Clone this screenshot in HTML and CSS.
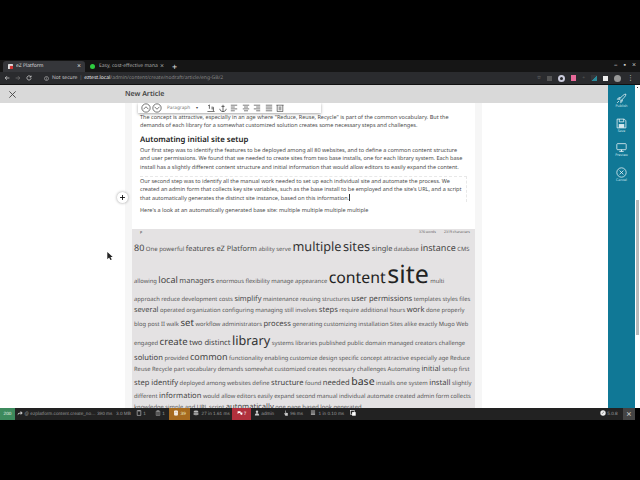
FILE: index.html
```html
<!DOCTYPE HTML>
<html>

<head>
	<meta charset="utf-8">
	<title>New Article</title>
	<link rel="stylesheet" href="styles.css">
</head>
<body>

<div class="letterbox"></div>

<div class="screen">

	<!-- browser -->
	<div class="tabs">
		<div class="tab active">
			<svg class="fav" viewBox="0 0 8 8"><rect width="8" height="8" rx="1" fill="#ddd"/><rect x="3" y="3" width="5" height="5" fill="#c33"/></svg>
			<span class="tab-name">eZ Platform</span><span class="tab-x">×</span>
		</div>
		<div class="tab">
			<span class="green-dot"></span>
			<span class="tab-name">Easy, cost-effective mana</span><span class="tab-x">×</span>
		</div>
		<span class="tab-new">+</span>
		<div class="win-btns"><span>–</span><span>▪</span><span>×</span></div>
	</div>

	<div class="urlbar">
		<svg class="nav" viewBox="0 0 10 10"><path d="M9 5H2M5 2L2 5l3 3" fill="none" stroke="#ddd" stroke-width="1.200"/></svg>
		<svg class="nav" viewBox="0 0 10 10"><path d="M1 5h7M5 2l3 3-3 3" fill="none" stroke="#777" stroke-width="1.200"/></svg>
		<svg class="nav" viewBox="0 0 10 10"><path d="M8 3a3.500 3.500 0 1 0 .5 2.500M8.500 1v2.500H6" fill="none" stroke="#ddd" stroke-width="1.200"/></svg>
		<svg class="url-info" viewBox="0 0 10 10"><circle cx="5" cy="5" r="4" fill="none" stroke="#ccc"/><path d="M5 4.500V7.500M5 2.500v1" stroke="#ccc"/></svg>
		<span class="url-secure">Not secure</span>
		<span class="url-sep">|</span>
		<span class="url-host">eztest.local</span><span class="url-path">/admin/content/create/nodraft/article/eng-GB/2</span>
		<div class="url-icons">
			<span class="ico-star">☆</span>
			<span class="ico-box"></span>
			<span class="ico-ring"></span>
			<span class="ico-pink"></span>
			<span class="ico-cross">+</span>
			<span class="ico-pen"></span>
			<span class="ico-puzzle"></span>
			<span class="ico-avatar"></span>
			<span class="ico-dots">⋮</span>
		</div>
	</div>

	<!-- app -->
	<div class="app">
		<div class="main">
			<div class="titlebar">
				<svg class="close" viewBox="0 0 10 10"><path d="M1.500 1.500l7 7M8.500 1.500l-7 7" stroke="#444" stroke-width="1"/></svg>
				<span class="title">New Article</span>
			</div>
			<div class="workspace">
				<div class="column">
					<div class="sheet">
						<div class="toolbar">
							<svg class="tb-round" viewBox="0 0 12 12"><circle cx="6" cy="6" r="5" fill="none" stroke="#333" stroke-width=".8"/><path d="M3 7.500l3-3 3 3" fill="none" stroke="#333" stroke-width=".8"/></svg>
							<svg class="tb-round" viewBox="0 0 12 12"><circle cx="6" cy="6" r="5" fill="none" stroke="#333" stroke-width=".8"/><path d="M3 4.500l3 3 3-3" fill="none" stroke="#333" stroke-width=".8"/></svg>
							<span class="tb-para">Paragraph</span>
							<span class="tb-caret">▾</span>
							<svg class="tb-ico" viewBox="0 0 10 10"><path d="M.5 9.500h9M3 1v5M1.500 2.500L3 1M8 9V4H5.500M5.500 6H8" fill="none" stroke="#333" stroke-width=".9"/></svg>
							<svg class="tb-ico" viewBox="0 0 10 10"><path d="M5 1v8.500M3 3h4M1 6c0 2 2 3.500 4 3.500S9 8 9 6" fill="none" stroke="#333" stroke-width=".9"/></svg>
							<svg class="tb-ico" viewBox="0 0 10 10"><path d="M1 1.500h8M1 3.800h5M1 6.100h8M1 8.500h5" fill="none" stroke="#333" stroke-width=".8"/></svg>
							<svg class="tb-ico" viewBox="0 0 10 10"><path d="M1 1.500h8M2.500 3.800h5M1 6.100h8M2.500 8.500h5" fill="none" stroke="#333" stroke-width=".8"/></svg>
							<svg class="tb-ico" viewBox="0 0 10 10"><path d="M1 1.500h8M4 3.800h5M1 6.100h8M4 8.500h5" fill="none" stroke="#333" stroke-width=".8"/></svg>
							<svg class="tb-ico" viewBox="0 0 10 10"><path d="M1 1.500h8M1 3.800h8M1 6.100h8M1 8.500h8" fill="none" stroke="#333" stroke-width=".8"/></svg>
							<svg class="tb-ico" viewBox="0 0 10 10"><path d="M.5 1.500h9M1.500 1.500v8h7v-8M4 3v5M6 3v5" fill="none" stroke="#333" stroke-width=".8"/></svg>
						</div>

						<p class="txt">The concept is attractive, especially in an age where "Reduce, Reuse, Recycle" is part of the common vocabulary. But the demands of each library for a somewhat customized solution creates some necessary steps and challenges.</p>
						<h3>Automating initial site setup</h3>
						<p class="txt">Our first step was to identify the features to be deployed among all 80 websites, and to define a common content structure and user permissions. We found that we needed to create sites from two base installs, one for each library system. Each base install has a slightly different content structure and initial information that would allow editors to easily expand the content.</p>
						<div class="focus">
							<p class="txt">Our second step was to identify all the manual work needed to set up each individual site and automate the process. We created an admin form that collects key site variables, such as the base install to be employed and the site's URL, and a script that automatically generates the distinct site instance, based on this information.<span class="cursor"></span></p>
							<span class="plus">
								<svg viewBox="0 0 10 10"><path d="M5 1.500v7M1.500 5h7" stroke="#111" stroke-width="1.300"/></svg>
							</span>
						</div>
						<p class="txt last">Here's a look at an automatically generated base site: multiple multiple multiple multiple</p>
					</div>

					<div class="cloud">
						<div class="cloud-stats"><span class="tag-p">p</span><span class="counts">376 words</span><span class="counts">2319 characters</span></div>
						<div class="words">
							<span class="w9">80</span> <span class="w6">One powerful</span> <span class="w7">features eZ Platform</span> ability serve <span class="w13">multiple</span> <span class="w13">sites</span> <span class="w7">single</span> database <span class="w9">instance</span> CMS<br>
							allowing <span class="w9">local</span> <span class="w7">managers</span> enormous flexibility manage appearance <span class="w16">content</span> <span class="w25">site</span> multi<br>
							approach reduce development costs <span class="w7">simplify</span> maintenance reusing structures <span class="w8">user permissions</span> templates styles files<br>
							<span class="w7">several</span> operated organization configuring managing still involves <span class="w8">steps</span> require additional hours <span class="w8">work</span> done properly<br>
							blog post II walk <span class="w10">set</span> workflow administrators <span class="w8">process</span> generating customizing installation Sites alike exactly Mugo Web<br>
							engaged <span class="w10">create</span> <span class="w8">two distinct</span> <span class="w13">library</span> systems libraries published public domain managed creators challenge<br>
							<span class="w8">solution</span> provided <span class="w9">common</span> functionality enabling customize design specific concept attractive especially age Reduce<br>
							Reuse Recycle part vocabulary demands somewhat customized creates necessary challenges Automating <span class="w7">initial</span> setup first<br>
							<span class="w8">step identify</span> deployed among websites define <span class="w8">structure</span> found <span class="w8">needed</span> <span class="w11">base</span> installs one system <span class="w8">install</span> slightly<br>
							different <span class="w8">information</span> would allow editors easily expand second manual individual automate created admin form collects<br>
							knowledge simple and URL script <span class="w8">automatically</span> one page based look generated
						</div>
					</div>
				</div>
			</div>
		</div>

		<div class="sidebar">
			<div class="action">
				<svg viewBox="0 0 20 20"><path d="M6 11l7-7c1.500-1.200 3.500-2 5-2 0 1.500-.8 3.500-2 5l-7 7zM6 11l-3.500.5L5 8.500l3 .2M9 14l-.5 3.500 3-2.500-.2-3M5.500 14.500L2 18" fill="none" stroke="#fff" stroke-width="1.300"/></svg>
				<span>Publish</span>
			</div>
			<div class="action">
				<svg viewBox="0 0 20 20"><path d="M2 2h13l3 3v13H2zM6 2v5h8V2" fill="none" stroke="#fff" stroke-width="1.300"/><rect x="5" y="11" width="10" height="7" fill="#d7e9ef"/></svg>
				<span>Save</span>
			</div>
			<div class="action">
				<svg viewBox="0 0 20 20"><rect x="1.500" y="3" width="17" height="11" rx="1.500" fill="none" stroke="#fff" stroke-width="1.300"/><path d="M6 17h8M10 14v3" stroke="#fff" stroke-width="1.500"/></svg>
				<span>Preview</span>
			</div>
			<div class="action">
				<svg viewBox="0 0 20 20"><circle cx="10" cy="10" r="8.500" fill="none" stroke="#fff" stroke-width="1.300"/><path d="M6.500 6.500l7 7M13.500 6.500l-7 7" stroke="#fff" stroke-width="1.300"/></svg>
				<span>Cancel</span>
			</div>
		</div>
		<div class="scrollbar"><span class="scroll-dot"></span><span class="scroll-thumb"></span></div>
	</div>

	<!-- symfony toolbar -->
	<div class="debugbar">
		<span class="db-status">200</span>
		<span class="db-cell"><svg class="db-ico" viewBox="0 0 10 10"><path d="M1 9c0-4 2-5 5-5V1.500L9.500 5 6 8.500V6C4 6 2.500 7 1 9z" fill="#ccc"/></svg>&nbsp;@ ezplatform.content.create_no…</span>
		<span class="db-cell">390 ms</span>
		<span class="db-cell">3.0 MB</span>
		<span class="db-cell"><svg class="db-ico" viewBox="0 0 10 10"><path d="M2 1h6v8H2zM4 .5v2M6 .5v2" fill="none" stroke="#ccc"/></svg>&nbsp;1</span>
		<span class="db-cell"><svg class="db-ico" viewBox="0 0 10 10"><path d="M2 2h6v7H2zM3.500 1h3v2h-3zM3.500 5h3M3.500 7h3" fill="none" stroke="#aaa"/></svg>&nbsp;1</span>
		<span class="db-warn"><svg class="db-ico" viewBox="0 0 10 10"><rect x="2" y="1" width="6" height="8" rx="1" fill="#fff"/><path d="M5 2.500v3M5 6.500v1" stroke="#a66a1e"/></svg>&nbsp;39</span>
		<span class="db-cell db-pad"><svg class="db-ico" viewBox="0 0 10 10"><ellipse cx="5" cy="2.500" rx="4" ry="1.500" fill="#bbb"/><path d="M1 4h8v4c0 1-8 1-8 0z" fill="#999"/></svg>&nbsp;&nbsp;27 in 1.61 ms</span>
		<span class="db-red"><svg class="db-ico" viewBox="0 0 10 10"><path d="M1 2h5v3H3L1 6.500zM6.500 4H9v3L8 8.500 6 7H4.500" fill="#fff"/></svg>&nbsp;7</span>
		<span class="db-cell db-pad"><svg class="db-ico" viewBox="0 0 10 10"><circle cx="5" cy="3" r="2" fill="#ccc"/><path d="M1.500 9c0-3 1.500-3.500 3.500-3.500S8.500 6 8.500 9z" fill="#ccc"/></svg>&nbsp;admin</span>
		<span class="db-cell"><svg class="db-ico" viewBox="0 0 10 10"><path d="M4 1v5L3 5 2 6l2 3.500h4V5L5 4.500V1z" fill="#ccc"/></svg>&nbsp;96 ms</span>
		<span class="db-cell"><svg class="db-ico" viewBox="0 0 10 10"><path d="M1.500 1.500h7M1.500 3.500h7M1.500 5.500h7M1.500 7.500h7" stroke="#bbb" stroke-width="1.300"/></svg>&nbsp;&nbsp;1 in 0.10 ms</span>
		<span class="db-cell"><svg class="db-ico" viewBox="0 0 10 10"><rect x="1" y="1" width="6" height="6" fill="none" stroke="#fff"/><rect x="3.500" y="3.500" width="6" height="6" fill="#fff"/></svg></span>
		<span class="db-cell"><svg class="db-ico" viewBox="0 0 10 10"><circle cx="5" cy="5" r="4.500" fill="#eee"/><path d="M3 6.500C5 6 4 4 7 3" stroke="#555" fill="none"/></svg>&nbsp;5.0.8</span>
		<span class="db-close">×</span>
		<span class="db-end"></span>
	</div>
</div>

<div class="letterbox"></div>

<svg class="pointer" viewBox="0 0 6 10"><path d="M0 0v8l2-2 1.500 3 1.500-.7L3.500 5.500H6z" fill="#222"/></svg>

</body>

</html>
```

FILE: styles.css
```css
html, body {
  margin: 0;
  padding: 0;
  background: #000;
}

body {
  width: 640px;
  height: 480px;
  overflow: hidden;
  position: relative;
  font-family: "Noto Sans", sans-serif;
  text-rendering: geometricPrecision;
}

.letterbox {
  height: 60px;
  background: #000;
}

.pointer {
  position: absolute;
  left: 107px;
  top: 252px;
  width: 6px;
  height: 9px;
}

.screen {
  height: 360px;
  display: flex;
  flex-direction: column;
  overflow: hidden;
  background: #fff;
}

/* browser */
.tabs {
  height: 12px;
  flex: none;
  display: flex;
  align-items: flex-end;
  padding-left: 3px;
  background: #151515;
  color: #ccc;
  font-size: 5px;
  line-height: 11px;
}

.tab {
  width: 83px;
  height: 11px;
  display: flex;
  align-items: center;
  padding-left: 5px;
  box-sizing: border-box;
  color: #aaa;
}

.tab.active {
  width: 82px;
  background: #35363a;
  border-radius: 3px 3px 0 0;
  color: #ddd;
}

.fav {
  width: 5px;
  height: 5px;
  margin-right: 3px;
}

.green-dot {
  width: 5px;
  height: 5px;
  margin-right: 4px;
  border-radius: 50%;
  background: #2ecc40;
}

.tab-name {
  flex: 1;
  overflow: hidden;
  white-space: nowrap;
}

.tab-x {
  width: 8px;
  font-size: 7px;
}

.tab-new {
  margin-left: 4px;
  font-size: 9px;
  color: #ddd;
}

.win-btns {
  margin-left: auto;
  display: flex;
  gap: 6px;
  padding-right: 4px;
  font-size: 7px;
  align-self: flex-start;
}

.urlbar {
  height: 12px;
  flex: none;
  display: flex;
  align-items: center;
  padding-left: 4px;
  background: #2a2b2e;
  color: #888;
  font-size: 5px;
  white-space: nowrap;
  border-bottom: 1px solid #111;
}

.nav {
  width: 6px;
  height: 6px;
  margin-right: 5px;
}

.url-info {
  width: 5px;
  height: 5px;
  margin-left: 7px;
  margin-right: 3px;
}

.url-secure {
  color: #ccc;
}

.url-sep {
  margin: 0 2px;
  color: #777;
}

.url-host {
  color: #eee;
}

.url-icons {
  margin-left: auto;
  display: flex;
  align-items: center;
  gap: 6px;
  padding-right: 6px;
  color: #999;
}

.ico-box {
  width: 5px;
  height: 5px;
  background: #555;
}

.ico-ring {
  width: 3px;
  height: 3px;
  border: 2px solid #ccd;
  border-radius: 50%;
}

.ico-pink {
  width: 5px;
  height: 6px;
  background: #e86a9a;
}

.ico-cross {
  color: #555;
}

.ico-pen {
  width: 6px;
  height: 6px;
  background: linear-gradient(135deg, #35363a 55%, #2a8a9a 55%);
}

.ico-puzzle {
  width: 5px;
  height: 5px;
  background: #eee;
}

.ico-avatar {
  width: 7px;
  height: 7px;
  border-radius: 50%;
  background: #999;
}

.ico-dots {
  color: #ddd;
  font-size: 7px;
}

/* app */
.app {
  flex: 1;
  min-height: 0;
  display: flex;
}

.main {
  flex: 1;
  min-width: 0;
  display: flex;
  flex-direction: column;
}

.titlebar {
  height: 18px;
  flex: none;
  display: flex;
  align-items: center;
  padding-left: 8px;
  background: #d9d9d9;
}

.close {
  width: 9px;
  height: 9px;
}

.title {
  margin-left: 108px;
  font-size: 7px;
  font-weight: 600;
  color: #444;
}

.workspace {
  flex: 1;
  min-height: 0;
  overflow: hidden;
  padding-left: 125px;
  background: #fff;
}

.column {
  width: 343px;
  padding: 0 7px;
  height: 100%;
  background: #f6f6f6;
}

.sheet {
  height: 126px;
  box-sizing: border-box;
  padding: 10px 8px 0;
  background: #fff;
  position: relative;
  font-size: 5.500px;
  color: #4a4a4a;
}

.toolbar {
  position: absolute;
  top: 0;
  left: 6px;
  width: 183px;
  height: 10px;
  display: flex;
  align-items: center;
  padding-left: 3px;
  box-sizing: border-box;
  background: #fff;
  box-shadow: 0 1px 3px rgba(0, 0, 0, .35);
  font-size: 4.700px;
  color: #777;
}

.tb-round {
  width: 10px;
  height: 10px;
  margin-right: 1px;
}

.tb-para {
  margin-left: 4px;
}

.tb-caret {
  margin: 0 9px 0 6px;
  font-size: 4px;
  color: #444;
}

.tb-ico {
  width: 8px;
  height: 8px;
  margin-right: 3.500px;
}

.txt {
  margin: 0;
  line-height: 8.400px;
}

h3 {
  margin: 5px 0 1px;
  font-size: 7.800px;
  line-height: 10px;
  font-weight: 600;
  color: #222;
}

.focus {
  position: relative;
  margin-top: 5px;
  border: 1px dashed #e8e8e8;
  border-width: 1px 1px 0 0;
  height: 25px;
}

.cursor {
  display: inline-block;
  width: 1px;
  height: 7px;
  vertical-align: -1px;
  background: #333;
}

.plus {
  position: absolute;
  left: -23px;
  top: 15px;
  width: 11px;
  height: 11px;
  display: flex;
  align-items: center;
  justify-content: center;
  border-radius: 50%;
  background: #fff;
  box-shadow: 0 0 3px rgba(0, 0, 0, .4);
}

.plus svg {
  width: 7px;
  height: 7px;
}

.last {
  margin-top: 4px;
}

/* word cloud */
.cloud {
  height: 200px;
  box-sizing: border-box;
  padding: 0 2px;
  background: #e4e2e3;
  color: #444;
}

.cloud-stats {
  height: 7px;
  display: flex;
  justify-content: flex-end;
  gap: 8px;
  padding: 1px 3px 0;
  font-size: 3.500px;
  color: #666;
}

.tag-p {
  margin-right: auto;
  margin-left: 3px;
  color: #222;
}

.words {
  font-size: 5.800px;
  line-height: 1.5;
  white-space: nowrap;
  color: #555;
}

.w6 { font-size: 6px; }
.w7 { font-size: 7.400px; color: #4a4a4a; }
.w8 { font-size: 7.600px; color: #444; }
.w9 { font-size: 9px; color: #444; }
.w10 { font-size: 9.600px; color: #3c3c3c; }
.w11 { font-size: 10.500px; color: #333; }
.w13 { font-size: 12.700px; color: #333; }
.w16 { font-size: 15.800px; color: #222; }
.w25 { font-size: 25px; color: #222; }

/* publish actions */
.sidebar {
  width: 27px;
  flex: none;
  padding-top: 8px;
  background: #107896;
  color: #cfe6ee;
}

.action {
  height: 24.600px;
  display: flex;
  flex-direction: column;
  align-items: center;
  font-size: 3.500px;
  line-height: 4px;
}

.action svg {
  width: 11px;
  height: 11px;
  margin-bottom: 1px;
}

.scrollbar {
  width: 5px;
  flex: none;
  background: #fff;
  position: relative;
}

.scroll-dot {
  position: absolute;
  top: 2px;
  left: 2px;
  width: 1px;
  height: 1px;
  background: #333;
}

.scroll-thumb {
  position: absolute;
  top: 115px;
  left: 1px;
  width: 3px;
  height: 135px;
  background: #bbb;
}

/* symfony toolbar */
.debugbar {
  height: 12px;
  flex: none;
  display: grid;
  grid-template-columns: 15px 82px 19px 20px 19px 14px 21px 42px 19px 32px 27px 40px 250px 23px 12px 5px;
  align-items: center;
  background: #222;
  color: #999;
  font-family: "Liberation Sans", sans-serif;
  font-size: 4.700px;
  line-height: 12px;
  white-space: nowrap;
}

.db-end {
  height: 12px;
  background: #000;
}

.db-ico {
  width: 6px;
  height: 6px;
  vertical-align: -1px;
}

.db-cell {
  overflow: hidden;
}

.db-pad {
  padding-left: 3px;
}

.db-status {
  height: 12px;
  text-align: center;
  background: #3d8a5d;
  color: #e6f3ea;
}

.db-cell:nth-child(2) {
  padding-left: 2px;
}

.db-warn {
  height: 12px;
  text-align: center;
  background: #a66a1e;
  color: #eec;
}

.db-red {
  height: 12px;
  text-align: center;
  background: #b0303c;
  color: #fff;
}

.db-close {
  height: 12px;
  text-align: center;
  background: #444;
  color: #ccc;
  font-size: 9px;
}
```
